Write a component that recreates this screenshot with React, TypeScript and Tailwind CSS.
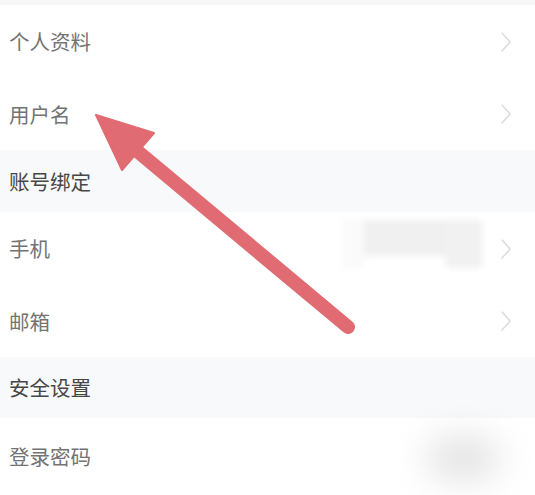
import React from "react";

const font = { fontFamily: '"Noto Sans CJK SC", "Noto Sans", sans-serif' };

function Chevron() {
  return (
    <svg width="14" height="22" viewBox="0 0 14 22" className="shrink-0">
      <path d="M3 2 L11 11 L3 20" fill="none" stroke="#dcdcdc" strokeWidth="1.5" strokeLinecap="round" strokeLinejoin="round" />
    </svg>
  );
}

function Row({ label, h, chevron = true, children }: { label: string; h: string; chevron?: boolean; children?: React.ReactNode }) {
  return (
    <div className={`relative flex items-center justify-between bg-white pl-[9px] pr-[22px] ${h}`}>
      <span className="text-[20.5px] leading-none text-[#737373]">{label}</span>
      {children}
      {chevron && <Chevron />}
    </div>
  );
}

function Header({ label, h }: { label: string; h: string }) {
  return (
    <div className={`flex items-center bg-[#f8f9fa] pl-[9px] ${h}`}>
      <span className="text-[20.5px] leading-none text-[#474747]">{label}</span>
    </div>
  );
}

export default function App() {
  return (
    <div className="relative w-[535px] h-[495px] overflow-hidden bg-white" style={font}>
      <div className="h-[5px] bg-[#f7f7f7]" />
      <Row label="个人资料" h="h-[73px]" />
      <Row label="用户名" h="h-[72px]" />
      <Header label="账号绑定" h="h-[62px]" />
      <Row label="手机" h="h-[73px]">
        <div className="absolute left-[342px] top-[8px] flex h-[48px] w-[140px] blur-[3px]">
          <div className="h-full w-[22px] bg-[#fafafa]" />
          <div className="h-[36px] w-[82px] bg-[#f0f0f0]" />
          <div className="h-full w-[36px] bg-[#f1f1f1]" />
        </div>
      </Row>
      <Row label="邮箱" h="h-[72px]" />
      <Header label="安全设置" h="h-[61px]" />
      <Row label="登录密码" h="h-[77px]" chevron={false}>
        <div className="absolute left-[428px] top-[20px] h-[40px] w-[70px] rounded-full bg-[#e0e0e0] blur-[18px]" />
      </Row>

      <svg className="absolute left-0 top-0 pointer-events-none" width="535" height="495" viewBox="0 0 535 495">
        <line x1="130" y1="145" x2="348" y2="327" stroke="#e06b72" strokeWidth="14" strokeLinecap="round" />
        <polygon points="96,115 154,133 122,170" fill="#e06b72" stroke="#e06b72" strokeWidth="2" strokeLinejoin="round" />
      </svg>
    </div>
  );
}
